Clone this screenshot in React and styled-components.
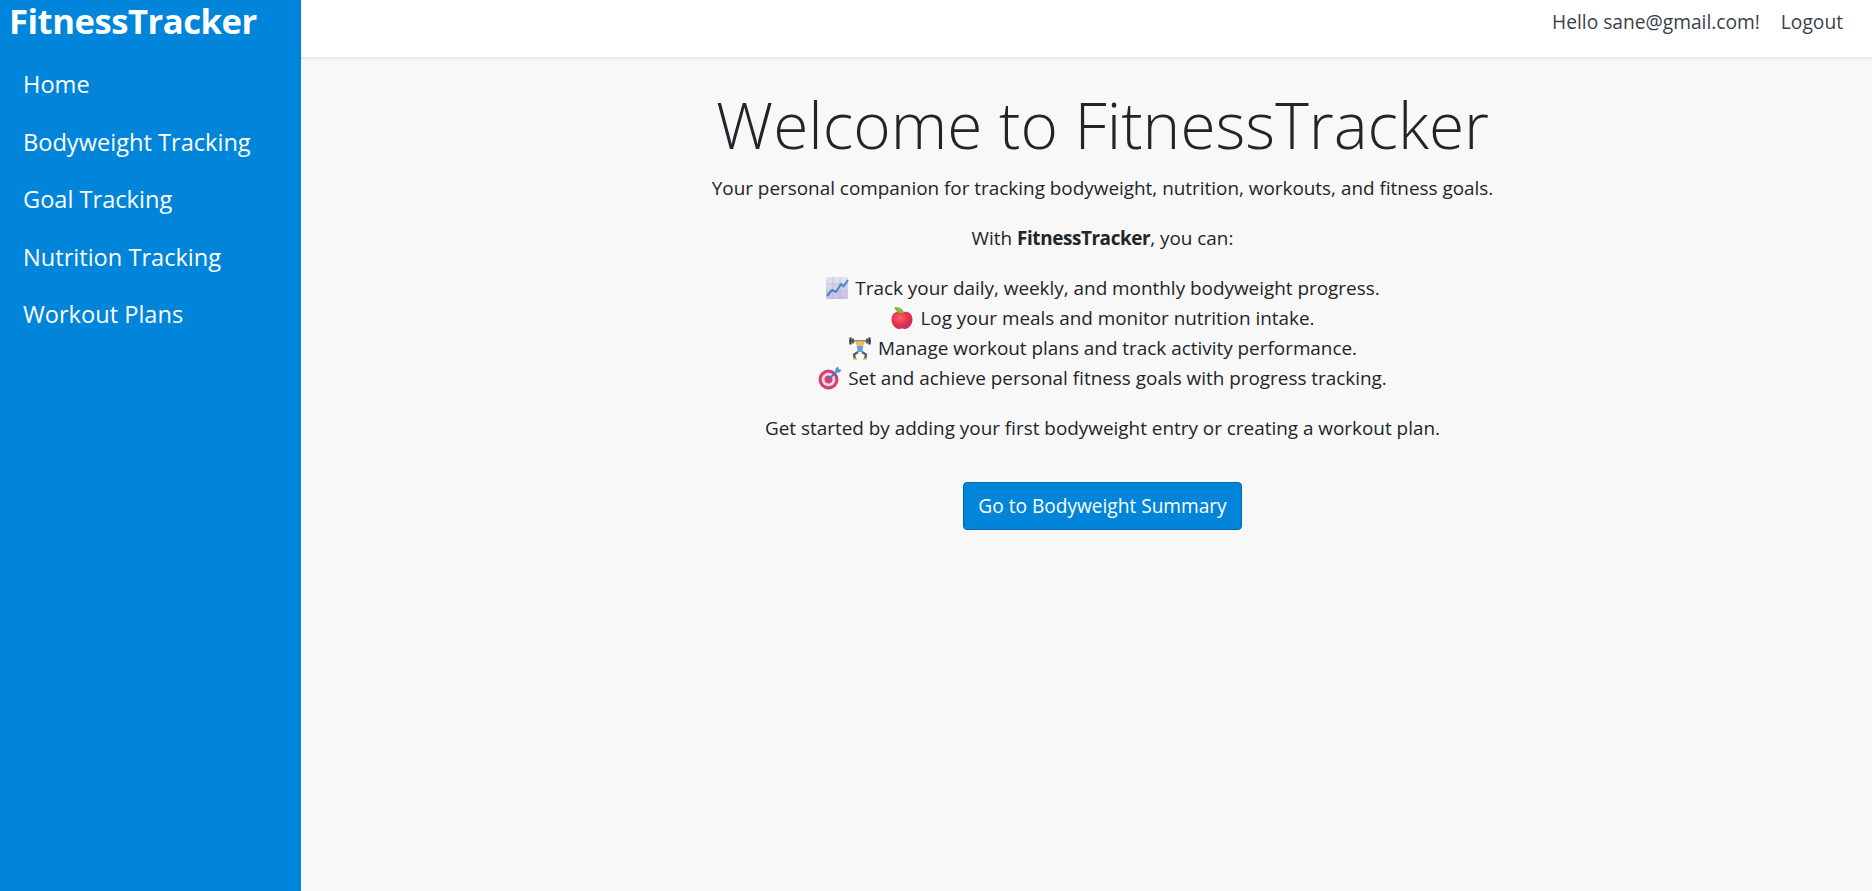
import React from 'react';
import styled, { createGlobalStyle } from 'styled-components';

const GlobalStyle = createGlobalStyle`
  html, body {
    margin: 0;
    height: 100%;
    background: #f8f8f8;
    font-family: "Open Sans", "Noto Sans", "Liberation Sans", sans-serif;
    color: #212529;
  }
`;

const Page = styled.div`
  display: flex;
  height: 891px;
  overflow: hidden;
`;

const Sidebar = styled.aside`
  width: 301px;
  flex: none;
  background: #0085da;
  color: #fff;
`;

const Brand = styled.div`
  padding-left: 9px;
  font-size: 34.7px;
  font-weight: 700;
  line-height: 42px;
  letter-spacing: -0.5px;
`;

const NavList = styled.nav`
  display: flex;
  flex-direction: column;
  padding: 14px 0 0 23px;
`;

const NavLink = styled.a`
  color: #fff;
  font-size: 23.6px;
  line-height: 57.5px;
  text-decoration: none;
`;

const Content = styled.div`
  flex: 1;
  display: flex;
  flex-direction: column;
  min-width: 0;
`;

const TopBar = styled.header`
  height: 58px;
  flex: none;
  box-sizing: border-box;
  background: #fff;
  border-bottom: 1px solid #e3e3e3;
  box-shadow: 0 1px 4px rgba(0, 0, 0, 0.05);
  display: flex;
  justify-content: flex-end;
  gap: 21px;
  padding: 9px 29px 0 0;
  font-size: 19.2px;
  line-height: 26px;
  color: #3a4149;
`;

const Main = styled.main`
  flex: 1;
  padding: 29px 0 0 32px;
  text-align: center;
`;

const Heading = styled.h1`
  margin: 0 0 9px;
  font-size: 64px;
  font-weight: 300;
  line-height: 1.2;
`;

const Paragraph = styled.p`
  margin: 0 0 20px;
  font-size: 18.9px;
  line-height: 30px;
`;

const ProductName = styled.strong`
  letter-spacing: -0.4px;
`;

const FeatureList = styled.div`
  margin-bottom: 20px;
`;

const Feature = styled.div`
  font-size: 18.9px;
  line-height: 30px;
`;

const Emoji = styled.svg`
  width: 24px;
  height: 24px;
  vertical-align: -5px;
  margin-right: 6px;
`;

const ActionButton = styled.a`
  display: inline-block;
  margin-top: 19px;
  padding: 0 14.5px;
  height: 48px;
  line-height: 47px;
  box-sizing: border-box;
  background: #0085da;
  border: 1px solid #0069ad;
  border-radius: 4px;
  color: #fff;
  font-size: 19.1px;
`;

const ChartIcon = () => (
  <Emoji viewBox="0 0 24 24">
    <defs>
      <linearGradient id="chartFill" x1="0" y1="0" x2="0" y2="1">
        <stop offset="0" stopColor="#e6e2f0" />
        <stop offset="1" stopColor="#c6bfe0" />
      </linearGradient>
    </defs>
    <rect x="1" y="1" width="22" height="22" rx="1.5" fill="url(#chartFill)" />
    <path d="M8 1v22M15 1v22M1 8h22M1 15h22" stroke="#b5aed2" strokeWidth="0.6" fill="none" />
    <path d="M2 20l5-6 4 2 5-8 2.500 2.500L23 4" stroke="#4686c6" strokeWidth="2" fill="none" strokeLinejoin="round" />
  </Emoji>
);

const AppleIcon = () => (
  <Emoji viewBox="0 0 24 24">
    <defs>
      <radialGradient id="appleFill" cx="0.4" cy="0.35" r="0.75">
        <stop offset="0" stopColor="#f4606a" />
        <stop offset="0.6" stopColor="#e02f48" />
        <stop offset="1" stopColor="#c42a6a" />
      </radialGradient>
    </defs>
    <path d="M12 6.500C8 4.500 1.500 6 1.500 13.500c0 5 4 9.500 7.500 9.500 1.500 0 2-.6 3-.6s1.500.6 3 .6c3.500 0 7.500-4.500 7.500-9.500C22.500 6 16 4.500 12 6.500z" fill="url(#appleFill)" />
    <path d="M4.500 1c4 0 8 1 9.500 5.500-4 1.200-8.500.5-9.500-5.500z" fill="#86b83c" />
  </Emoji>
);

const LifterIcon = () => (
  <Emoji viewBox="0 0 24 24">
    <path d="M1 5h22" stroke="#5b6068" strokeWidth="1.500" />
    <path d="M2.500 1.500v7M21.500 1.500v7" stroke="#33373d" strokeWidth="2.200" />
    <path d="M5 2.500v5M19 2.500v5" stroke="#4a4f57" strokeWidth="1.800" />
    <path d="M7.500 5l2.500 4.500M16.500 5L14 9.500" stroke="#e8b64c" strokeWidth="2" />
    <circle cx="12" cy="7.500" r="2.800" fill="#f0bf52" />
    <path d="M8.800 10h6.400l-.8 6H9.600z" fill="#5fa3e0" />
    <path d="M10 16l-4 2.500 1 4.500M14 16l4 2.500-1 4.500" stroke="#5a6068" strokeWidth="2.400" fill="none" />
    <path d="M5 23h4M15 23h4" stroke="#e8b64c" strokeWidth="1.400" />
  </Emoji>
);

const TargetIcon = () => (
  <Emoji viewBox="0 0 24 24">
    <circle cx="10.500" cy="13.500" r="10" fill="#d8406f" />
    <circle cx="10.500" cy="13.500" r="6.800" fill="#f3d9e2" />
    <circle cx="10.500" cy="13.500" r="4" fill="#d8406f" />
    <path d="M10.500 13.500L20 4" stroke="#3c7fc2" strokeWidth="1.800" />
    <path d="M17.500 7V2.500L20 .5l.8 2.700 2.700.8-2 2.500h-4.500z" fill="#3d9be0" />
  </Emoji>
);

const features = [
  { icon: <ChartIcon />, text: 'Track your daily, weekly, and monthly bodyweight progress.' },
  { icon: <AppleIcon />, text: 'Log your meals and monitor nutrition intake.' },
  { icon: <LifterIcon />, text: 'Manage workout plans and track activity performance.' },
  { icon: <TargetIcon />, text: 'Set and achieve personal fitness goals with progress tracking.' },
];

const navItems = ['Home', 'Bodyweight Tracking', 'Goal Tracking', 'Nutrition Tracking', 'Workout Plans'];

const App = () => (
  <Page>
    <GlobalStyle />
    <Sidebar>
      <Brand>FitnessTracker</Brand>
      <NavList>
        {navItems.map(item => (
          <NavLink key={item}>{item}</NavLink>
        ))}
      </NavList>
    </Sidebar>
    <Content>
      <TopBar>
        <span>Hello sane@gmail.com!</span>
        <span>Logout</span>
      </TopBar>
      <Main>
        <Heading>Welcome to FitnessTracker</Heading>
        <Paragraph>Your personal companion for tracking bodyweight, nutrition, workouts, and fitness goals.</Paragraph>
        <Paragraph>With <ProductName>FitnessTracker</ProductName>, you can:</Paragraph>
        <FeatureList>
          {features.map(feature => (
            <Feature key={feature.text}>
              {feature.icon}
              {feature.text}
            </Feature>
          ))}
        </FeatureList>
        <Paragraph>Get started by adding your first bodyweight entry or creating a workout plan.</Paragraph>
        <ActionButton>Go to Bodyweight Summary</ActionButton>
      </Main>
    </Content>
  </Page>
);

export default App;
